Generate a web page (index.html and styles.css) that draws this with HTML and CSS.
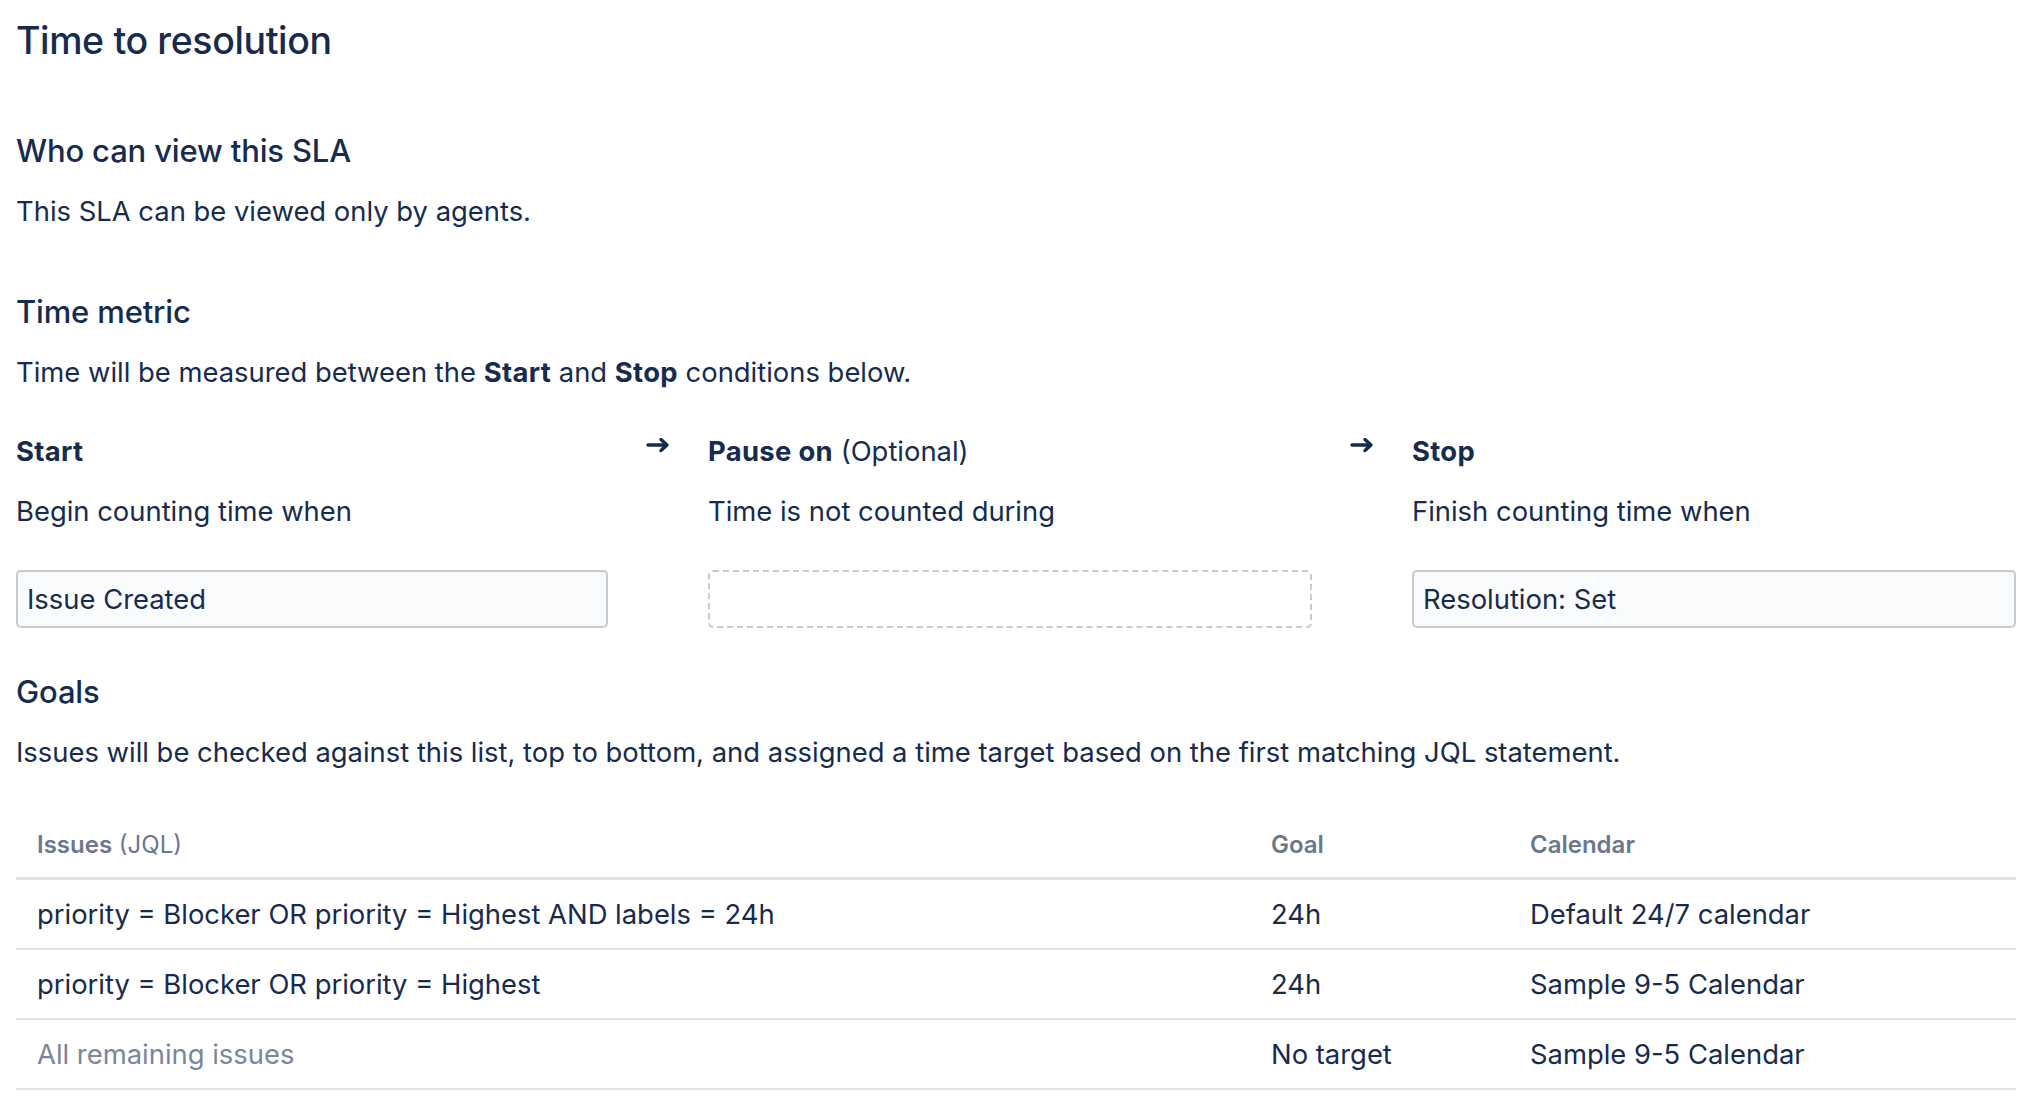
FILE: index.html
```html
<!DOCTYPE html>
<html lang="en">
<head>
<meta charset="utf-8">
<title>Time to resolution</title>
<link rel="stylesheet" href="styles.css">
</head>
<body>
<main class="page">
  <h1 class="title">Time to resolution</h1>

  <h2 class="section-title first">Who can view this SLA</h2>
  <p class="text">This SLA can be viewed only by agents.</p>

  <h2 class="section-title">Time metric</h2>
  <p class="text">Time will be measured between the <strong>Start</strong> and <strong>Stop</strong> conditions below.</p>

  <div class="conditions">
    <div class="cond">
      <div class="cond-label"><strong>Start</strong></div>
      <div class="cond-desc">Begin counting time when</div>
      <div class="cond-box">Issue Created</div>
    </div>
    <div class="arrow">
      <svg width="24" height="16" viewBox="0 0 24 16" aria-hidden="true"><path d="M2 8h19M15 2.5l6 5.5-6 5.5" fill="none" stroke="#172B4D" stroke-width="3.4" stroke-linecap="round" stroke-linejoin="round"/></svg>
    </div>
    <div class="cond">
      <div class="cond-label"><strong>Pause on</strong> (Optional)</div>
      <div class="cond-desc">Time is not counted during</div>
      <div class="cond-box dashed"></div>
    </div>
    <div class="arrow">
      <svg width="24" height="16" viewBox="0 0 24 16" aria-hidden="true"><path d="M2 8h19M15 2.5l6 5.5-6 5.5" fill="none" stroke="#172B4D" stroke-width="3.4" stroke-linecap="round" stroke-linejoin="round"/></svg>
    </div>
    <div class="cond">
      <div class="cond-label"><strong>Stop</strong></div>
      <div class="cond-desc">Finish counting time when</div>
      <div class="cond-box">Resolution: Set</div>
    </div>
  </div>

  <h2 class="section-title goals">Goals</h2>
  <p class="text">Issues will be checked against this list, top to bottom, and assigned a time target based on the first matching JQL statement.</p>

  <table class="goals-table">
    <thead>
      <tr>
        <th class="col-issues"><span class="th-strong">Issues</span> (JQL)</th>
        <th class="col-goal"><span class="th-strong">Goal</span></th>
        <th class="col-cal"><span class="th-strong">Calendar</span></th>
      </tr>
    </thead>
    <tbody>
      <tr>
        <td>priority = Blocker OR priority = Highest AND labels = 24h</td>
        <td>24h</td>
        <td>Default 24/7 calendar</td>
      </tr>
      <tr>
        <td>priority = Blocker OR priority = Highest</td>
        <td>24h</td>
        <td>Sample 9-5 Calendar</td>
      </tr>
      <tr>
        <td class="muted">All remaining issues</td>
        <td>No target</td>
        <td>Sample 9-5 Calendar</td>
      </tr>
    </tbody>
  </table>
</main>
</body>
</html>
```

FILE: styles.css
```css
html, body {
  margin: 0;
  padding: 0;
  background: #ffffff;
}

body {
  font-family: Inter, "Noto Sans", "Liberation Sans", sans-serif;
  color: #172B4D;
  font-size: 27.4px;
}

.page {
  padding: 17px 28px 0 16px;
}

.title {
  margin: 0;
  font-size: 37.5px;
  line-height: 48px;
  font-weight: 500;
  letter-spacing: -0.01em;
}

.section-title {
  margin: 63px 0 0;
  font-size: 31px;
  line-height: 40px;
  font-weight: 500;
  letter-spacing: -0.005em;
}

.section-title.first {
  margin-top: 66px;
}

.section-title.goals {
  margin-top: 44px;
}

.text {
  margin: 22px 0 0;
  font-size: 27.4px;
  line-height: 36px;
}

.text strong,
.cond-label strong {
  font-weight: 700;
  letter-spacing: 0.012em;
}

.conditions {
  display: grid;
  grid-template-columns: 592px 100px 604px 100px 604px;
  margin-top: 43px;
}

.cond-label {
  font-size: 27.4px;
  line-height: 36px;
}

.cond-desc {
  margin-top: 24px;
  font-size: 27.4px;
  line-height: 36px;
}

.cond-box {
  margin-top: 41px;
  box-sizing: border-box;
  height: 58px;
  padding: 0 9px;
  display: flex;
  align-items: center;
  background: #FAFBFC;
  border: 2px solid #C6CBD3;
  border-radius: 5px;
  font-size: 27.4px;
}

.cond-box.dashed {
  background: #ffffff;
  border: 2px dashed #C6CBD3;
}

.arrow {
  display: flex;
  justify-content: center;
  padding-top: 4px;
}

.arrow svg {
  display: block;
}

.goals-table {
  margin-top: 41px;
  width: 100%;
  border-collapse: collapse;
  font-size: 27.4px;
}

.goals-table th {
  text-align: left;
  font-weight: 400;
  font-size: 24px;
  color: #6B778C;
  height: 66px;
  padding: 0 21px;
  border-bottom: 3px solid #DFE1E6;
  vertical-align: middle;
}

.goals-table .th-strong {
  font-weight: 600;
}

.goals-table .col-goal {
  width: 217px;
}

.goals-table .col-cal {
  width: 465px;
}

.goals-table td {
  height: 68px;
  padding: 0 21px;
  border-bottom: 2px solid #DFE1E6;
  vertical-align: middle;
}

.goals-table td.muted {
  color: #7A869A;
}
```
